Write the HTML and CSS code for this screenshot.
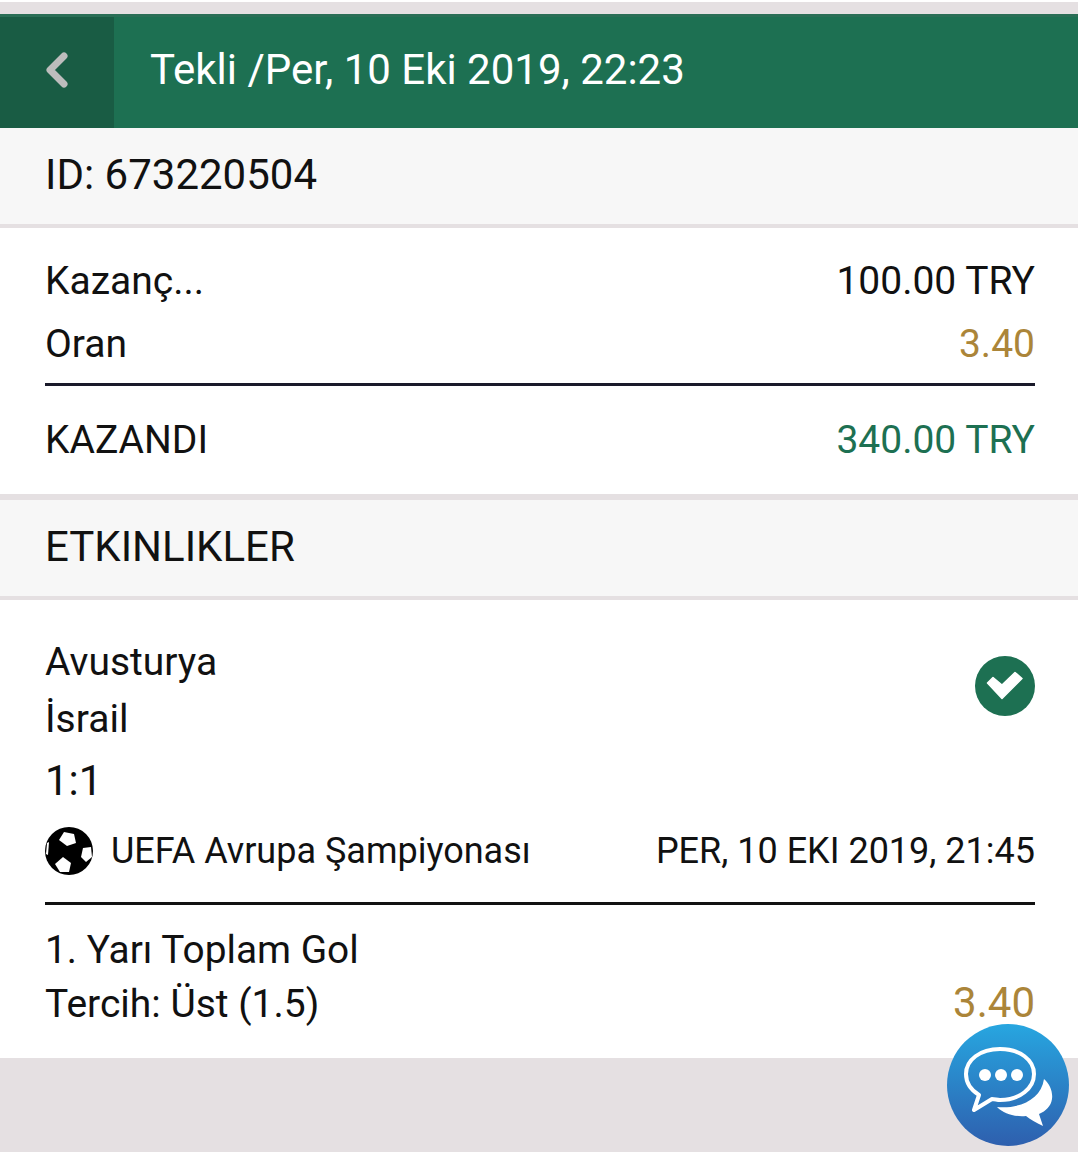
FILE: index.html
```html
<!DOCTYPE html>
<html>
<head>
  <meta charset="utf-8">
  <title>Tekli</title>
  <link rel="stylesheet" href="styles.css">
</head>
<body>
  <div class="top-strip"></div>

  <div class="header">
    <div class="back-btn">
      <svg class="back-icon" width="24" height="36" viewBox="0 0 24 36">
        <path d="M19 4 L5 18 L19 32" fill="none" stroke="#bdbdbd" stroke-width="7" stroke-linecap="round" stroke-linejoin="round"/>
      </svg>
    </div>
    <div class="header-title">Tekli /Per, 10 Eki 2019, 22:23</div>
  </div>

  <div class="section-head">ID: 673220504</div>

  <div class="summary">
    <div class="row row-stake"><span>Kazanç...</span><span>100.00 TRY</span></div>
    <div class="row row-odds"><span>Oran</span><span class="gold">3.40</span></div>
    <div class="row row-result"><span>KAZANDI</span><span class="green">340.00 TRY</span></div>
  </div>

  <div class="section-head">ETKINLIKLER</div>

  <div class="event">
    <div class="event-top">
      <div class="teams">
        <div class="team-a">Avusturya</div>
        <div class="team-b">İsrail</div>
        <div class="score">1:1</div>
      </div>
      <svg class="check-icon" width="60" height="60" viewBox="0 0 60 60">
        <circle cx="30" cy="30" r="30" fill="#1d7052"/>
        <path d="M12.5 27 L18 21.5 L27 29 L40 16.5 L47 22.5 L27 42.5 Z" fill="#fff" stroke="#fff" stroke-width="1.5" stroke-linejoin="round"/>
      </svg>
    </div>
    <div class="league-row">
      <div class="league">
        <svg class="ball-icon" width="48" height="48" viewBox="0 0 48 48">
          <circle cx="24" cy="24" r="24" fill="#000"/>
          <path d="M19 5 L29 7 L31 16 L22 19 L14 13 Z" fill="#fff"/>
          <path d="M38 21 L46 20 L47 30 L41 35 L36 30 Z" fill="#fff"/>
          <path d="M18 30 L26 36 L24 45 L15 45 L10 37 Z" fill="#fff"/>
          <path d="M2 16 L4 15 L3 28 L1 27 Z" fill="#fff"/>
        </svg>
        <span>UEFA Avrupa Şampiyonası</span>
      </div>
      <span>PER, 10 EKI 2019, 21:45</span>
    </div>
    <div class="market">
      <div class="market-name">1. Yarı Toplam Gol</div>
      <div class="market-pick"><span>Tercih: Üst (1.5)</span><span class="gold big">3.40</span></div>
    </div>
  </div>

  <div class="chat-btn">
    <svg width="122" height="122" viewBox="0 0 122 122">
      <defs>
        <linearGradient id="chatBg" x1="0" y1="0" x2="0" y2="1">
          <stop offset="0" stop-color="#27a6e0"/>
          <stop offset="1" stop-color="#2e5fae"/>
        </linearGradient>
      </defs>
      <circle cx="61" cy="61" r="61" fill="url(#chatBg)"/>
      <path d="M97 55 C103 60 106 68 105 75 C104 82 99 87 92 90 L96 102 C89 99 83 95 79 92 C68 93 57 90 50 83 C72 85 94 76 97 55 Z" fill="#fff"/>
      <path d="M53 25 C33 25 19 36 19 50 C19 59 24 66 32 71 L27 86 L45 75 C48 75 50 76 53 76 C73 76 87 64 87 50 C87 36 73 25 53 25 Z" fill="none" stroke="#fff" stroke-width="4" stroke-linejoin="round"/>
      <circle cx="38" cy="51" r="6" fill="#fff"/>
      <circle cx="54" cy="51" r="6" fill="#fff"/>
      <circle cx="70" cy="51" r="6" fill="#fff"/>
    </svg>
  </div>
</body>
</html>
```
FILE: styles.css
```css
html, body {
  margin: 0;
  padding: 0;
}

body {
  height: 1152px;
  overflow: hidden;
  background-color: #e5e0e2;
  font-family: Roboto, sans-serif;
  color: #111;
  position: relative;
  padding-top: 2px;
  box-sizing: border-box;
  background-image: linear-gradient(#fff, #fff);
  background-size: 100% 2px;
  background-repeat: no-repeat;
}

.top-strip {
  height: 12px;
}

.header {
  display: flex;
  height: 114px;
  background-color: #1d7052;
  border-top: 3px solid #2a6e56;
  box-sizing: border-box;
}

.back-btn {
  width: 114px;
  background-color: #195c44;
  display: flex;
  align-items: center;
  justify-content: center;
}

.back-icon {
  margin-bottom: 5px;
}

.header-title {
  margin-left: 36px;
  line-height: 106px;
  font-size: 42px;
  color: #fff;
}

.section-head {
  height: 100px;
  box-sizing: border-box;
  background-color: #f7f7f7;
  border-bottom: 4px solid #e5e0e2;
  padding: 0 45px;
  line-height: 94px;
  font-size: 42px;
}

.summary {
  background-color: #fff;
  padding: 22px 43px 0 45px;
  height: 272px;
  box-sizing: border-box;
  border-bottom: 6px solid #e5e0e2;
}

.row {
  display: flex;
  justify-content: space-between;
  font-size: 39px;
  line-height: 63px;
}

.row-odds {
  padding-bottom: 7px;
  border-bottom: 3px solid #1a1a2a;
}

.row-result {
  margin-top: 23px;
}

.gold {
  color: #ab8539;
}

.green {
  color: #1d7052;
}

.event {
  background-color: #fff;
  padding: 28px 43px 0 45px;
  height: 458px;
  box-sizing: border-box;
}

.event-top {
  display: flex;
  justify-content: space-between;
  align-items: flex-start;
}

.teams {
  font-size: 39px;
}

.team-a {
  line-height: 68px;
}

.team-b {
  line-height: 46px;
}

.score {
  line-height: 78px;
  font-size: 42px;
}

.check-icon {
  margin-top: 28px;
}

.league-row {
  display: flex;
  justify-content: space-between;
  align-items: center;
  font-size: 36px;
  height: 62px;
  border-bottom: 3px solid #111;
  padding-bottom: 20px;
}

.league {
  display: flex;
  align-items: center;
  gap: 18px;
}

.market {
  font-size: 38.8px;
  padding-top: 18px;
}

.market-name {
  line-height: 54px;
}

.market-pick {
  display: flex;
  justify-content: space-between;
  line-height: 54px;
  font-size: 39px;
}

.big {
  font-size: 42px;
  line-height: 52px;
}

.chat-btn {
  position: absolute;
  left: 947px;
  top: 1024px;
  width: 122px;
  height: 122px;
}
```
